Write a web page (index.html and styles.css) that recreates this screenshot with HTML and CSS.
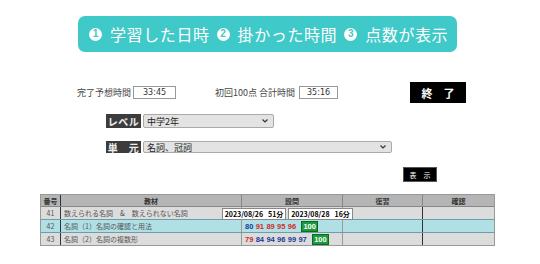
FILE: index.html
```html
<!DOCTYPE html>
<html lang="ja">
<head>
<meta charset="utf-8">
<link rel="stylesheet" href="styles.css">
</head>
<body>
<div class="page">
  <div class="banner">
    <span class="num">1</span><span class="btxt">学習した日時</span>
    <span class="num">2</span><span class="btxt">掛かった時間</span>
    <span class="num">3</span><span class="btxt">点数が表示</span>
  </div>

  <div class="row row-time">
    <span class="lbl lbl1">完了予想時間</span>
    <span class="box box1">33:45</span>
    <span class="lbl lbl2">初回100点 合計時間</span>
    <span class="box box2">35:16</span>
    <span class="btn-end">終　了</span>
  </div>

  <div class="row row-level">
    <span class="tag">レベル</span>
    <div class="sel sel-level"><span>中学2年</span><svg class="chev" width="6" height="4" viewBox="0 0 6 4"><path d="M0.5 0.5 L3 3 L5.5 0.5" fill="none" stroke="#333" stroke-width="1.2"/></svg></div>
  </div>

  <div class="row row-unit">
    <span class="tag">単　元</span>
    <div class="sel sel-unit"><span>名詞、冠詞</span><svg class="chev" width="6" height="4" viewBox="0 0 6 4"><path d="M0.5 0.5 L3 3 L5.5 0.5" fill="none" stroke="#333" stroke-width="1.2"/></svg></div>
  </div>

  <div class="row row-show">
    <span class="btn-show">表　示</span>
  </div>

  <div class="table">
    <div class="tr th">
      <div class="c c-no">番号</div>
      <div class="c c-mat">教材</div>
      <div class="c c-q">設問</div>
      <div class="c c-rev">復習</div>
      <div class="c c-chk">確認</div>
    </div>
    <div class="tr r-grey">
      <div class="c c-no">41</div>
      <div class="c c-mat left">数えられる名詞<span class="amp">&amp;</span>数えられない名詞</div>
      <div class="c c-q tipcell">
        <span class="tip tip1">2023/08/26<span class="gap"></span>51分</span>
        <span class="tip tip2">2023/08/28<span class="gap"></span>16分</span>
      </div>
      <div class="c c-rev"></div>
      <div class="c c-chk"></div>
    </div>
    <div class="tr r-blue">
      <div class="c c-no">42</div>
      <div class="c c-mat left">名詞（1）名詞の確認と用法</div>
      <div class="c c-q scores">
        <span class="s b">80</span><span class="s r">91</span><span class="s r">89</span><span class="s r">95</span><span class="s r">96</span><span class="full">100</span>
      </div>
      <div class="c c-rev"></div>
      <div class="c c-chk"></div>
    </div>
    <div class="tr r-grey">
      <div class="c c-no">43</div>
      <div class="c c-mat left">名詞（2）名詞の複数形</div>
      <div class="c c-q scores">
        <span class="s r">79</span><span class="s b">84</span><span class="s b">94</span><span class="s b">96</span><span class="s b">99</span><span class="s b">97</span><span class="full">100</span>
      </div>
      <div class="c c-rev"></div>
      <div class="c c-chk"></div>
    </div>
  </div>
</div>
</body>
</html>
```
FILE: styles.css
```css
* { box-sizing: border-box; }
html, body { margin: 0; padding: 0; background: #fff; }
body { width: 540px; height: 264px; overflow: hidden; font-family: "Noto Sans CJK JP", "Noto Sans", sans-serif; color: #333; }
.page { padding-top: 16px; }

.banner {
  margin-left: 78px;
  width: 379px;
  height: 36px;
  border-radius: 7px;
  background: #3fc9c8;
  display: flex;
  align-items: center;
  padding-left: 11px;
  color: #fff;
  font-size: 16px;
  line-height: 1;
  white-space: nowrap;
}
.num {
  flex: none;
  width: 13px; height: 13px; border-radius: 50%;
  background: #fff; color: #3fc9c8;
  font-size: 10px; font-weight: 700;
  display: inline-flex; align-items: center; justify-content: center;
  font-family: "Liberation Sans", sans-serif;
  margin-right: 8px;
}
.btxt { flex: none; margin-right: 7px; letter-spacing: 0.6px; }

.row { display: flex; align-items: center; }
.row-time { margin-top: 30px; height: 21px; font-size: 9px; }
.lbl { white-space: nowrap; color: #444; flex: none; }
.lbl1 { margin-left: 77px; width: 54px; }
.lbl2 { margin-left: 39px; width: 81px; }
.box {
  flex: none;
  height: 13px; border: 1px solid #999; background: #fff;
  font-size: 8px; color: #333; display: flex; align-items: center; padding-left: 9px;
  font-family: "DejaVu Sans", sans-serif;
}
.box1 { width: 43px; margin-left: 2px; }
.box2 { width: 39px; margin-left: 3px; padding-left: 7px; }
.btn-end {
  flex: none;
  margin-left: 72px; width: 56px; height: 21px; background: #000; color: #fff;
  font-size: 11px; font-weight: 700; display: flex; align-items: center; justify-content: center;
}

.row-level { margin-top: 11px; height: 14px; }
.row-unit { margin-top: 13px; height: 12px; }
.tag {
  margin-left: 106px; width: 35px; height: 100%; background: #3c3c3c; color: #eee;
  font-size: 10px; font-weight: 700; display: flex; align-items: center; justify-content: center;
  letter-spacing: 0.5px;
}
.sel {
  margin-left: 2px; height: 100%; border: 1px solid #aaa; background: #e3e3e3;
  border-radius: 2px; display: flex; align-items: center; justify-content: space-between;
  padding: 0 5px 0 3px; font-size: 9px; color: #222;
}
.sel-level { width: 131px; }
.sel-unit { width: 249px; }

.row-show { margin-top: 14px; height: 15px; }
.btn-show {
  margin-left: 403px; width: 34px; height: 15px; background: #000; color: #fff;
  font-size: 7px; display: flex; align-items: center; justify-content: center;
  border: 1px solid #555;
}

.table {
  margin-top: 12px; margin-left: 40px; width: 455px;
  border: 1px solid #999; font-size: 7px;
}
.tr { display: flex; height: 13px; border-top: 1px solid #888; }
.th { height: 11px; background: #b5b5b5; border-top: none; color: #333; }
.r-grey { background: #dcdcdc; }
.r-blue { background: #b0e0e6; border-top: 1px solid #6a9fa5; }
.r-blue + .r-grey { border-top: 1px solid #6a9fa5; }
.c { display: flex; align-items: center; justify-content: center; height: 100%; color: #555; white-space: nowrap; }
.th .c { color: #333; font-weight: 700; }
.c-no { width: 20px; border-right: 1px solid #333; }
.c-mat { width: 181px; border-right: 1px solid #999; }
.c-q { width: 101px; border-right: 1px solid #999; }
.c-rev { width: 80px; border-right: 1px solid #333; }
.c-chk { flex: 1; }
.left { justify-content: flex-start; padding-left: 3px; }
.amp { margin: 0 7px; }
.th .c-mat, .th .c-q, .th .c-rev { border-right-color: #888; }

.tipcell { position: relative; }
.tip {
  position: absolute; top: 1px; height: 12px; background: #fff; border: 1px solid #888;
  color: #000; font-weight: 700; font-size: 7px; font-family: "Noto Sans CJK JP", sans-serif;
  display: flex; align-items: center; justify-content: center; z-index: 2; line-height: 1;
}
.tip .gap { width: 5px; }
.tip1 { left: -20px; width: 64px; }
.tip2 { left: 46px; width: 65px; }

.scores { justify-content: flex-start; padding-left: 3px; font-family: "Liberation Sans", sans-serif; font-weight: 700; }
.s { flex: none; width: 10.7px; font-size: 7.5px; }
.s.b { color: #1a3a9a; }
.s.r { color: #d02a2a; }
.full { flex: none; margin-left: 3px; background: #1a9a3a; color: #fff; font-size: 7.5px; padding: 0 1px; height: 11px; display: flex; align-items: center; border: 1px solid #0d6a25; }
```
